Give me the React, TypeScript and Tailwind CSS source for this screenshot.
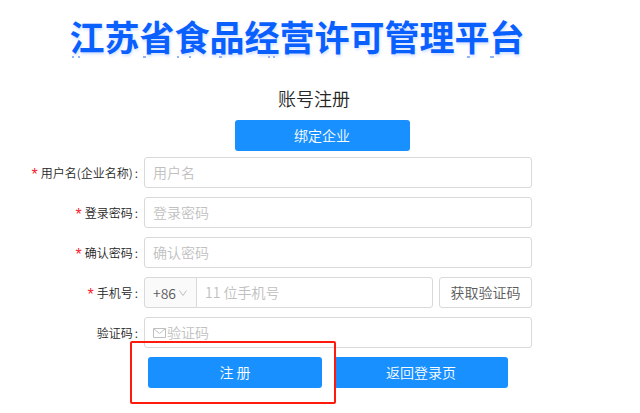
import React, { useState } from 'react';
import clsx from 'clsx';

type FieldProps = {
  id: string;
  label: string;
  required?: boolean;
  children: React.ReactNode;
}

const inputClass =
  "h-[31px] w-full min-w-0 rounded-[3px] border border-[#d9d9d9] bg-white px-2 pb-0.5 text-sm text-[#595959] outline-none placeholder:text-[#bfbfbf] focus:border-[#1890ff]";

const primaryClass =
  "h-[31px] rounded-[3px] bg-[#1890ff] pb-0.5 text-sm text-white cursor-pointer hover:bg-[#40a9ff]";

function Field({ id, label, required, children }: FieldProps) {
  return (
    <div className="grid grid-cols-[112px_minmax(0,1fr)] items-center gap-1">
      <label htmlFor={id} className="flex items-center justify-end gap-0.5 pr-0.5 whitespace-nowrap text-xs text-[#262626]">
        {required && <span className="pt-1 pr-px font-['Liberation_Sans',sans-serif] text-base leading-4 text-[#f5222d]">*</span>}
        <span>{label}</span>
        <span>:</span>
      </label>
      {children}
    </div>
  );
}

// Tops of the second title line, cut off by the banner edge
function BannerEdge() {
  return (
    <svg className="h-[2px] w-full" viewBox="0 0 594 2" preserveAspectRatio="none" fill="#8fb4f7" aria-hidden="true">
      <path d="M72 0h2v2h-2zM78 0h2v2h-2zM143 0h3v2h-3zM177 0h2v2h-2zM189 0h2v2h-2zM219 0h3v2h-3zM268 0h2v2h-2zM273 0h2v2h-2zM467 0h3v2h-3zM490 0h4v2h-4z" />
    </svg>
  );
}

export default function App() {
  const [areaCode, setAreaCode] = useState("+86");

  return (
    <div className="min-h-screen bg-white font-['Noto_Sans_CJK_SC','Noto_Sans',sans-serif] font-[350]">
      {/* Banner */}
      <header className="pt-4 pr-[46px]">
        <h1 className="text-center text-[35px] leading-10 font-bold whitespace-nowrap text-[#0a60ff] [text-shadow:1px_2px_3px_rgba(10,96,255,0.18)]">
          江苏省食品经营许可管理平台
        </h1>
        <BannerEdge />
      </header>

      <main>
        <h2 className="mt-[26px] pr-3 text-center text-lg font-[350] text-[#262626]">账号注册</h2>
        <div className="mt-2 flex justify-center pl-1">
          <button type="button" className={clsx(primaryClass, "w-[175px]")}>绑定企业</button>
        </div>

        <form className="mt-[6px] flex flex-col gap-[9px] pl-7 pr-[108px]" onSubmit={(e) => e.preventDefault()}>
          <Field id="username" label="用户名(企业名称)" required>
            <input id="username" type="text" placeholder="用户名" className={inputClass} />
          </Field>
          <Field id="password" label="登录密码" required>
            <input id="password" type="password" placeholder="登录密码" className={inputClass} />
          </Field>
          <Field id="confirm" label="确认密码" required>
            <input id="confirm" type="password" placeholder="确认密码" className={inputClass} />
          </Field>

          <Field id="mobile" label="手机号" required>
            <div className="flex">
              <div className="relative shrink-0">
                <select
                  aria-label="区号"
                  value={areaCode}
                  onChange={(e) => setAreaCode(e.target.value)}
                  className="h-[31px] w-[53px] appearance-none rounded-l-[3px] border border-[#d9d9d9] bg-[#fafafa] pl-2 text-sm text-[#595959] outline-none"
                >
                  <option value="+86">+86</option>
                </select>
                <svg className="pointer-events-none absolute top-3 right-2.5 h-2 w-2" viewBox="0 0 8 8" fill="none" stroke="#bfbfbf" aria-hidden="true">
                  <path d="M.5 1.5 4 6.5 7.5 1.5" />
                </svg>
              </div>
              <input id="mobile" type="tel" placeholder="11 位手机号" className={clsx(inputClass, "-ml-px rounded-l-none")} />
              <button type="button" className="ml-1.5 h-[31px] w-[93px] shrink-0 cursor-pointer rounded-[3px] border border-[#d9d9d9] bg-white pb-0.5 text-sm text-[#595959]">
                获取验证码
              </button>
            </div>
          </Field>

          <Field id="captcha" label="验证码">
            <div className="flex h-[31px] items-center rounded-[3px] border border-[#d9d9d9] bg-white px-2">
              <svg className="h-[10px] w-[13px] shrink-0" viewBox="0 0 13 10" fill="none" stroke="#bfbfbf" aria-hidden="true">
                <path d="M.5.5h12v9H.5zM1 1l5.500 4.500L12 1" />
              </svg>
              <input
                id="captcha"
                type="text"
                placeholder="验证码"
                className="w-full min-w-0 bg-transparent pb-0.5 pl-px text-sm text-[#595959] outline-none placeholder:text-[#bfbfbf]"
              />
            </div>
          </Field>

          {/* Actions */}
          <div className="grid grid-cols-2 gap-3 pl-[120px] pr-6">
            <div className="relative z-10 flex">
              <button type="submit" className={clsx(primaryClass, "w-full")}>注 册</button>
              {/* Highlight frame */}
              <span className="pointer-events-none absolute -top-4 -right-3.5 -bottom-4 -left-[18px] rounded-[2px] border-2 border-[#ff1a0d]" />
            </div>
            <button type="button" className={primaryClass}>返回登录页</button>
          </div>
        </form>
      </main>
    </div>
  );
}
